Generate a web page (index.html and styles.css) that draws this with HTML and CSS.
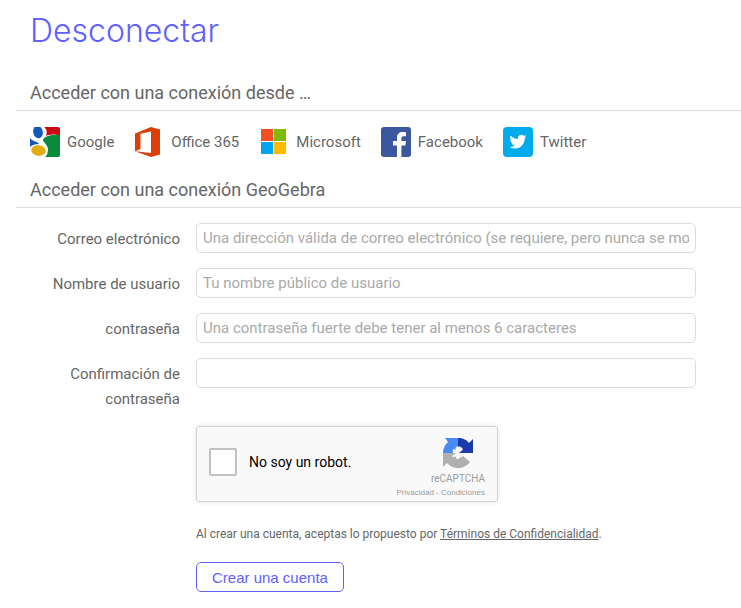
FILE: index.html
```html
<!DOCTYPE html>
<html lang="es">
<head>
    <meta charset="UTF-8">
    <meta name="viewport" content="width=device-width, initial-scale=1.0">
    <title>Desconectar</title>
    <link rel="stylesheet" href="styles.css">
</head>
<body>
    <main class="page">
        <h1 class="title">Desconectar</h1>

        <h2 class="section-title">Acceder con una conexión desde …</h2>
        <div class="providers">
            <a class="provider" href="#google">
                <svg width="30" height="30" viewBox="0 0 30 30">
                    <clipPath id="tile"><rect width="30" height="30" rx="2"/></clipPath>
                    <g clip-path="url(#tile)">
                        <rect width="30" height="30" fill="#fff"/>
                        <path d="M14 0H30V9C24 6 19 8 14 9Z" fill="#cc0a14"/>
                        <path d="M12 12C17 8 24 7 30 8V30H14C18 26 19 20 13 15Z" fill="#078a3b"/>
                        <path d="M0 11C3 15 7 14 9 17C5 17 2 18 0 20Z" fill="#1259be"/>
                        <ellipse cx="8" cy="5" rx="4.7" ry="6.4" transform="rotate(-14 8 5)" fill="#1259be"/>
                        <path d="M13 0C18 5 15 9 12 12C10 15 17 17 17 23C17 26 15 29 13 31" fill="none" stroke="#fff" stroke-width="2.2"/>
                        <ellipse cx="8.5" cy="23.5" rx="7.3" ry="5.2" transform="rotate(8 8.5 23.5)" fill="#e5aa12"/>
                    </g>
                </svg>
                <span>Google</span>
            </a>
            <a class="provider" href="#office">
                <svg width="30" height="30" viewBox="0 0 30 30">
                    <path d="M1 6.5L17 0L26 2.6V27.4L17 30L1 24.3L17 26V4.4L6.5 6.8V22L1 24.3Z" fill="#dc3e08"/>
                </svg>
                <span>Office 365</span>
            </a>
            <a class="provider" href="#microsoft">
                <svg width="30" height="30" viewBox="0 0 30 30">
                    <rect x="2" y="2" width="12" height="12" fill="#f25022"/>
                    <rect x="15" y="2" width="12" height="12" fill="#7fba00"/>
                    <rect x="2" y="15" width="12" height="12" fill="#00a4ef"/>
                    <rect x="15" y="15" width="12" height="12" fill="#ffb900"/>
                </svg>
                <span>Microsoft</span>
            </a>
            <a class="provider" href="#facebook">
                <svg width="30" height="30" viewBox="0 0 30 30">
                    <rect width="30" height="30" rx="3" fill="#3b579d"/>
                    <path d="M16 30V18.5H12V14H16V10.8C16 7 18.3 5 21.6 5C23.2 5 24.5 5.1 25 5.2V9.2H22.5C20.8 9.2 20.4 10 20.4 11.3V14H25L24.4 18.5H20.4V30Z" fill="#fff"/>
                </svg>
                <span>Facebook</span>
            </a>
            <a class="provider" href="#twitter">
                <svg width="30" height="30" viewBox="0 0 30 30">
                    <rect width="30" height="30" rx="4" fill="#00aced"/>
                    <path transform="translate(6.6 6.2) scale(.7)" d="M23.95 4.57a10 10 0 0 1-2.82.77 4.96 4.96 0 0 0 2.16-2.72c-.95.55-2 .95-3.13 1.18a4.92 4.92 0 0 0-8.38 4.48C7.69 8.1 4.07 6.13 1.64 3.16a4.92 4.92 0 0 0 1.52 6.57 4.9 4.9 0 0 1-2.23-.61v.06a4.92 4.92 0 0 0 3.95 4.83 5 5 0 0 1-2.21.08 4.94 4.94 0 0 0 4.6 3.42A9.87 9.87 0 0 1 0 19.54a13.99 13.99 0 0 0 7.55 2.21c9.05 0 14-7.5 14-13.98 0-.21 0-.42-.02-.63a9.94 9.94 0 0 0 2.46-2.55z" fill="#fff"/>
                </svg>
                <span>Twitter</span>
            </a>
        </div>

        <h2 class="section-title">Acceder con una conexión GeoGebra</h2>
        <form class="form">
            <div class="row">
                <label class="label" for="email">Correo electrónico</label>
                <input class="field" id="email" type="email" placeholder="Una dirección válida de correo electrónico (se requiere, pero nunca se mostrará)">
            </div>
            <div class="row">
                <label class="label" for="username">Nombre de usuario</label>
                <input class="field" id="username" type="text" placeholder="Tu nombre público de usuario">
            </div>
            <div class="row">
                <label class="label" for="password">contraseña</label>
                <input class="field" id="password" type="password" placeholder="Una contraseña fuerte debe tener al menos 6 caracteres">
            </div>
            <div class="row">
                <label class="label" for="confirm">Confirmación de contraseña</label>
                <input class="field" id="confirm" type="password">
            </div>

            <div class="form-footer">
                <div class="captcha">
                    <input class="captcha-box" id="robot" type="checkbox">
                    <label class="captcha-label" for="robot">No soy un robot.</label>
                    <div class="captcha-brand">
                        <svg width="32" height="32" viewBox="0 0 32 32">
                            <path d="M16 1V9.500C13.500 9.500 13 11 14 13L12 12C10.500 12.500 10.500 14 11 16H1C1 11 3 8 6 5L3 1Z" fill="#4a8af4"/>
                            <path d="M16 1C21 1 25 3 27 6L31 2V16H17L21 12.500C20 10 18 9 16 9.500Z" fill="#1c3aa9"/>
                            <path d="M1 16H14L10 19C12 21 13 19 14 20C14 23 17 23 18 20C20 21 21 20 20 18L28 25C22 33 11 33 5 26L1 30Z" fill="#b0b0b0"/>
                        </svg>
                        <span class="captcha-name">reCAPTCHA</span>
                        <span class="captcha-links"><a href="#privacidad">Privacidad</a> - <a href="#condiciones">Condiciones</a></span>
                    </div>
                </div>
                <p class="terms">Al crear una cuenta, aceptas lo propuesto por <a href="#terminos">Términos de Confidencialidad</a>.</p>
                <button class="submit" type="submit">Crear una cuenta</button>
            </div>
        </form>
    </main>
</body>
</html>
```
FILE: styles.css
```css
* {
    box-sizing: border-box;
}

body {
    margin: 0;
    background-color: #fff;
    color: #666;
    font-family: Roboto, "Liberation Sans", sans-serif;
    font-size: 15px;
    line-height: 25px;
}

.page {
    padding: 11px 0 16px 16px;
}

.title {
    margin: 0 0 29px;
    padding-left: 14px;
    color: #6161ff;
    font-family: Inter, "Open Sans", sans-serif;
    font-size: 32px;
    font-weight: 300;
    line-height: 40px;
}

.section-title {
    margin: 0;
    padding: 0 14px 5px;
    border-bottom: 1px solid #dcdcdc;
    font-size: 18px;
    font-weight: 400;
}

.providers {
    display: flex;
    flex-wrap: wrap;
    gap: 20px;
    padding: 16px 14px 20px;
}

.provider {
    display: flex;
    align-items: center;
    gap: 7px;
    color: #666;
    text-decoration: none;
}

.form {
    padding-top: 15px;
}

.row {
    display: flex;
    gap: 16px;
    margin-bottom: 15px;
    padding-right: 45px;
}

.label {
    flex: 0 0 164px;
    padding: 4px 0 0 20px;
    text-align: right;
}

.field {
    flex: 1;
    min-width: 0;
    max-width: 500px;
    height: 30px;
    padding: 0 6px;
    border: 1px solid #dcdcdc;
    border-radius: 5px;
    background-color: #fff;
    color: #666;
    font-family: inherit;
    font-size: 15px;
}

.field::placeholder {
    color: #a9a9a9;
}

.form-footer {
    padding-left: 180px;
}

.row + .form-footer {
    margin-top: -1px;
}

.captcha {
    display: flex;
    align-items: center;
    max-width: 302px;
    height: 76px;
    padding: 0 12px 4px;
    border: 1px solid #d3d3d3;
    border-radius: 3px;
    background-color: #f9f9f9;
    box-shadow: 0 0 4px 1px rgba(0, 0, 0, 0.08);
}

.captcha-box {
    appearance: none;
    width: 28px;
    height: 28px;
    margin: 0 12px 0 0;
    border: 2px solid #c1c1c1;
    border-radius: 2px;
    background-color: #fff;
}

.captcha-box:checked {
    background-color: #4a8af4;
}

.captcha-label {
    color: #000;
    font-size: 14px;
}

.captcha-brand {
    display: flex;
    flex-direction: column;
    align-items: flex-end;
    margin-left: auto;
    padding-top: 12px;
    color: #9b9b9b;
}

.captcha-brand svg {
    margin-right: 11px;
}

.captcha-name {
    margin-top: 3px;
    font-size: 10px;
    line-height: 14px;
}

.captcha-links {
    font-family: "Liberation Sans", sans-serif;
    font-size: 8px;
    line-height: 14px;
}

.captcha-links a {
    color: inherit;
    text-decoration: none;
}

.terms {
    margin: 20px 0 15px;
    font-size: 12px;
}

.terms a {
    color: inherit;
}

.submit {
    height: 30px;
    padding: 0 15px;
    border: 1px solid #6161ff;
    border-radius: 5px;
    background-color: #fff;
    color: #6161ff;
    font-family: "Liberation Sans", sans-serif;
    font-size: 15px;
    cursor: pointer;
}
```
